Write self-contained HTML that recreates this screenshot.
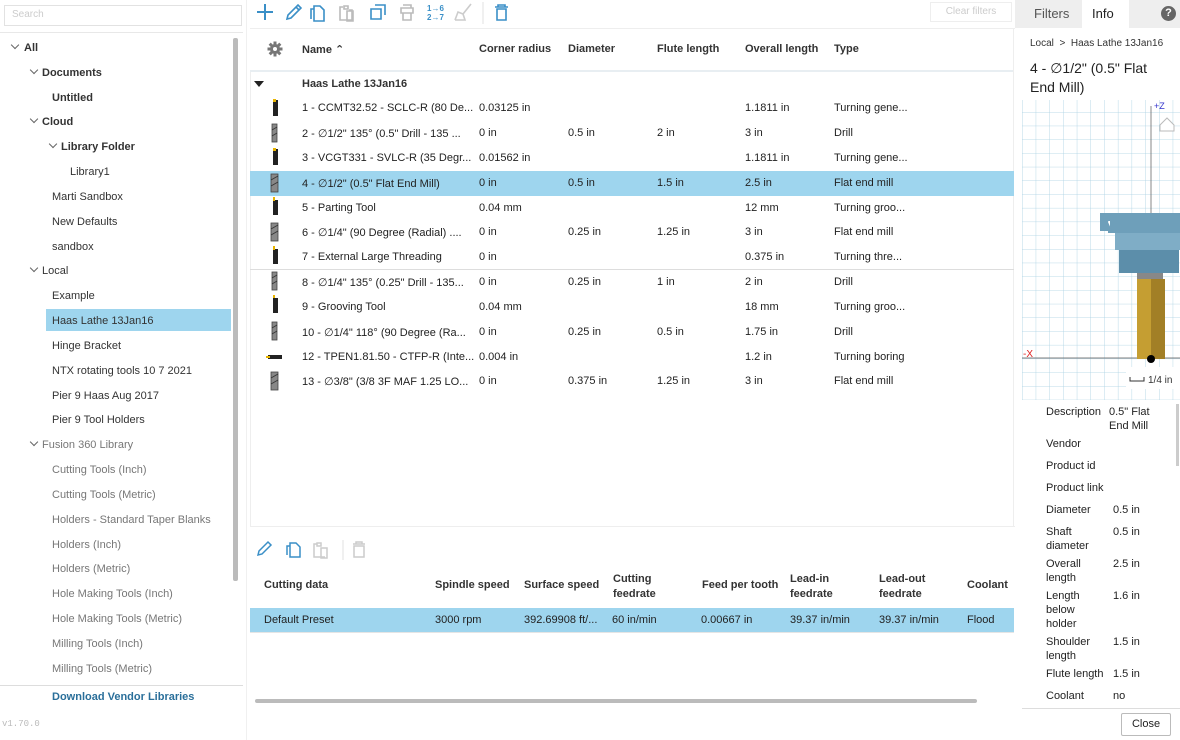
<!DOCTYPE html>
<html><head><meta charset="utf-8">
<style>
*{box-sizing:border-box;margin:0;padding:0}
body{width:1180px;height:740px;overflow:hidden;background:#fff;font-family:"Liberation Sans","DejaVu Sans",sans-serif;font-size:11px;color:#222;position:relative}
.a{position:absolute;white-space:nowrap}
.t{position:absolute;white-space:nowrap;line-height:14px}
.tree .t{font-weight:bold;color:#333;margin-top:1px}
.tree .g{font-weight:normal;color:#777}
.chev{position:absolute;width:6px;height:6px;border-right:1px solid #666;border-bottom:1px solid #666;transform:rotate(45deg)}
.row{position:absolute;left:250px;width:764px;height:25px}
.row span{position:absolute;top:6px;white-space:nowrap}
.hd{font-weight:bold;color:#333}
</style></head><body>

<!-- LEFT PANEL -->
<div class="a" style="left:4px;top:5px;width:238px;height:21px;border:1px solid #e2e2e2;"></div>
<div class="a" style="left:12px;top:9px;color:#ccc;font-size:10px">Search</div>
<div class="a" style="left:0;top:32px;width:243px;height:1px;background:#e8e8e8"></div>
<div class="a" style="left:233px;top:38px;width:5px;height:543px;background:#bbb;border-radius:2px"></div>
<div class="tree">
<div class="chev" style="left:12px;top:42px"></div><div class="t" style="left:24px;top:40px">All</div>
<div class="chev" style="left:31px;top:67px"></div><div class="t" style="left:42px;top:65px">Documents</div>
<div class="t" style="left:52px;top:90px">Untitled</div>
<div class="chev" style="left:31px;top:116px"></div><div class="t" style="left:42px;top:114px">Cloud</div>
<div class="chev" style="left:50px;top:141px"></div><div class="t" style="left:61px;top:139px">Library Folder</div>
<div class="t" style="left:70px;top:164px;font-weight:normal">Library1</div>
<div class="t" style="left:52px;top:189px;font-weight:normal">Marti Sandbox</div>
<div class="t" style="left:52px;top:214px;font-weight:normal">New Defaults</div>
<div class="t" style="left:52px;top:239px;font-weight:normal">sandbox</div>
<div class="chev" style="left:31px;top:265px"></div><div class="t" style="left:42px;top:263px;font-weight:normal">Local</div>
<div class="t" style="left:52px;top:288px;font-weight:normal">Example</div>
<div class="a" style="left:46px;top:309px;width:185px;height:22px;background:#9ed5ee"></div>
<div class="t" style="left:52px;top:313px;font-weight:normal">Haas Lathe 13Jan16</div>
<div class="t" style="left:52px;top:338px;font-weight:normal">Hinge Bracket</div>
<div class="t" style="left:52px;top:363px;font-weight:normal">NTX rotating tools 10 7 2021</div>
<div class="t" style="left:52px;top:388px;font-weight:normal">Pier 9 Haas Aug 2017</div>
<div class="t" style="left:52px;top:412px;font-weight:normal">Pier 9 Tool Holders</div>
<div class="chev" style="left:31px;top:439px"></div><div class="t g" style="left:42px;top:437px">Fusion 360 Library</div>
<div class="t g" style="left:52px;top:462px">Cutting Tools (Inch)</div>
<div class="t g" style="left:52px;top:487px">Cutting Tools (Metric)</div>
<div class="t g" style="left:52px;top:512px">Holders - Standard Taper Blanks</div>
<div class="t g" style="left:52px;top:537px">Holders (Inch)</div>
<div class="t g" style="left:52px;top:561px">Holders (Metric)</div>
<div class="t g" style="left:52px;top:586px">Hole Making Tools (Inch)</div>
<div class="t g" style="left:52px;top:611px">Hole Making Tools (Metric)</div>
<div class="t g" style="left:52px;top:636px">Milling Tools (Inch)</div>
<div class="t g" style="left:52px;top:661px">Milling Tools (Metric)</div>
</div>
<div class="a" style="left:0;top:685px;width:243px;height:1px;background:#ddd"></div>
<div class="t" style="left:52px;top:690px;color:#2a6f9a;font-weight:bold">Download Vendor Libraries</div>
<div class="a" style="left:2px;top:719px;font-family:'Liberation Mono',monospace;font-size:9px;color:#bbb">v1.70.0</div>
<div class="a" style="left:246px;top:0;width:1px;height:740px;background:#f0f0f0"></div>

<!-- TOOLBAR -->
<svg class="a" style="left:252px;top:0" width="270" height="26" fill="none" stroke-width="1.6">
 <path d="M13 4v16M5 12h16" stroke="#3a8fc7" stroke-width="2"/>
 <path d="M35 19l1-4 10-10 3 3-10 10z M44 7l3 3" stroke="#3a8fc7"/>
 <path d="M62 6h6l4 4v11h-10z M62 9h-3v10" stroke="#3a8fc7"/>
 <path d="M91 7h-3v13h12v-10h-3 M92 6h4v3h-4z M95 11h6v10h-6z" stroke="#bbb"/>
 <path d="M119 9h10v10h-10z M123 5h10v10" stroke="#3a8fc7"/>
 <path d="M149 8h12v5h-12z M151 13v7h8v-7 M151 5h8v3" stroke="#bbb"/>
 <text x="175" y="11" font-size="8" fill="#3a8fc7" stroke="none" font-weight="bold" font-family="Liberation Sans">1→6</text>
 <text x="175" y="20" font-size="8" fill="#3a8fc7" stroke="none" font-weight="bold" font-family="Liberation Sans">2→7</text>
 <path d="M203 20l3-8 5 2 8-10 M203 20h10l-2-6" stroke="#ccc"/>
 <path d="M231 2v22" stroke="#e0e0e0" stroke-width="1"/>
 <path d="M243 7h13 M246 7v-2h7v2 M245 9h9v11h-9z" stroke="#3a8fc7"/>
</svg>
<div class="a" style="left:930px;top:2px;width:82px;height:20px;border:1px solid #eee;color:#ccc;font-size:10px;text-align:center;line-height:18px">Clear filters</div>
<div class="a" style="left:250px;top:28px;width:765px;height:1px;background:#eee"></div>

<!-- HEADER -->
<svg class="a" style="left:267px;top:41px" width="16" height="16" viewBox="0 0 16 16"><g fill="#777"><circle cx="8" cy="8" r="5"/><rect x="6.5" y="0.5" width="3" height="15"/><rect x="0.5" y="6.5" width="15" height="3"/><rect x="6.5" y="0.5" width="3" height="15" transform="rotate(45 8 8)"/><rect x="6.5" y="0.5" width="3" height="15" transform="rotate(-45 8 8)"/></g><circle cx="8" cy="8" r="2" fill="#fff"/></svg>
<div class="a hd" style="left:302px;top:43px">Name &#8963;</div>
<div class="a hd" style="left:479px;top:43px">Corner radius</div>
<div class="a hd" style="left:568px;top:43px">Diameter</div>
<div class="a hd" style="left:657px;top:43px">Flute length</div>
<div class="a hd" style="left:745px;top:43px">Overall length</div>
<div class="a hd" style="left:834px;top:43px">Type</div>
<div class="a" style="left:250px;top:70px;width:764px;height:2px;background:#e8eef2"></div>
<div class="a" style="left:254px;top:81px;width:0;height:0;border-left:5px solid transparent;border-right:5px solid transparent;border-top:6px solid #222"></div>
<div class="a" style="left:302px;top:78px;color:#333;font-weight:bold">Haas Lathe 13Jan16</div>
<div class="a" style="left:250px;top:72px;width:1px;height:455px;background:#eee"></div>
<div class="a" style="left:1013px;top:29px;width:1px;height:498px;background:#eee"></div>

<!-- ROWS -->
<div class="row" style="top:96px"><span style="left:52px">1 - CCMT32.52 - SCLC-R (80 De...</span><span style="left:229px">0.03125 in</span><span style="left:495px">1.1811 in</span><span style="left:584px">Turning gene...</span></div>
<div class="row" style="top:121px"><span style="left:52px">2 - ∅1/2" 135° (0.5" Drill - 135 ...</span><span style="left:229px">0 in</span><span style="left:318px">0.5 in</span><span style="left:407px">2 in</span><span style="left:495px">3 in</span><span style="left:584px">Drill</span></div>
<div class="row" style="top:146px"><span style="left:52px">3 - VCGT331 - SVLC-R (35 Degr...</span><span style="left:229px">0.01562 in</span><span style="left:495px">1.1811 in</span><span style="left:584px">Turning gene...</span></div>
<div class="row" style="top:171px;background:#9ed5ee"><span style="left:52px">4 - ∅1/2" (0.5" Flat End Mill)</span><span style="left:229px">0 in</span><span style="left:318px">0.5 in</span><span style="left:407px">1.5 in</span><span style="left:495px">2.5 in</span><span style="left:584px">Flat end mill</span></div>
<div class="row" style="top:196px"><span style="left:52px">5 - Parting Tool</span><span style="left:229px">0.04 mm</span><span style="left:495px">12 mm</span><span style="left:584px">Turning groo...</span></div>
<div class="row" style="top:220px"><span style="left:52px">6 - ∅1/4" (90 Degree (Radial) ....</span><span style="left:229px">0 in</span><span style="left:318px">0.25 in</span><span style="left:407px">1.25 in</span><span style="left:495px">3 in</span><span style="left:584px">Flat end mill</span></div>
<div class="row" style="top:245px"><span style="left:52px">7 - External Large Threading</span><span style="left:229px">0 in</span><span style="left:495px">0.375 in</span><span style="left:584px">Turning thre...</span></div>
<div class="a" style="left:250px;top:269px;width:764px;height:1px;background:#ddd"></div>
<div class="row" style="top:270px"><span style="left:52px">8 - ∅1/4" 135° (0.25" Drill - 135...</span><span style="left:229px">0 in</span><span style="left:318px">0.25 in</span><span style="left:407px">1 in</span><span style="left:495px">2 in</span><span style="left:584px">Drill</span></div>
<div class="row" style="top:295px"><span style="left:52px">9 - Grooving Tool</span><span style="left:229px">0.04 mm</span><span style="left:495px">18 mm</span><span style="left:584px">Turning groo...</span></div>
<div class="row" style="top:320px"><span style="left:52px">10 - ∅1/4" 118° (90 Degree (Ra...</span><span style="left:229px">0 in</span><span style="left:318px">0.25 in</span><span style="left:407px">0.5 in</span><span style="left:495px">1.75 in</span><span style="left:584px">Drill</span></div>
<div class="row" style="top:345px"><span style="left:52px">12 - TPEN1.81.50 - CTFP-R (Inte...</span><span style="left:229px">0.004 in</span><span style="left:495px">1.2 in</span><span style="left:584px">Turning boring</span></div>
<div class="row" style="top:369px"><span style="left:52px">13 - ∅3/8" (3/8 3F MAF 1.25 LO...</span><span style="left:229px">0 in</span><span style="left:318px">0.375 in</span><span style="left:407px">1.25 in</span><span style="left:495px">3 in</span><span style="left:584px">Flat end mill</span></div>

<!-- row icons -->
<svg class="a" style="left:266px;top:96px" width="20" height="300">
 <g fill="#222"><rect x="7" y="4" width="5" height="16"/><rect x="7" y="53" width="5" height="16"/><rect x="7" y="104" width="5" height="15"/><rect x="7" y="153" width="5" height="15"/><rect x="7" y="302" width="5" height="15"/><rect x="2" y="259" width="14" height="4"/></g>
 <g fill="#e8b400"><rect x="7" y="3" width="3" height="3"/><rect x="7" y="52" width="3" height="3"/><rect x="7" y="101" width="2" height="4"/><rect x="7" y="150" width="2" height="4"/><rect x="7" y="199" width="2" height="4"/><rect x="0" y="260" width="4" height="2"/></g>
 <g fill="#888" stroke="#444" stroke-width="0.8"><rect x="6" y="28" width="5" height="18"/><rect x="5" y="78" width="7" height="18"/><rect x="5" y="127" width="7" height="18"/><rect x="6" y="176" width="5" height="18"/><rect x="6" y="226" width="5" height="18"/><rect x="5" y="276" width="7" height="18"/></g>
 <g stroke="#333" stroke-width="0.8"><path d="M6 34l5-3M6 40l5-3M5 84l7-4M5 90l7-4M5 133l7-4M5 139l7-4M6 182l5-3M6 188l5-3M6 232l5-3M6 238l5-3M5 282l7-4M5 288l7-4"/></g>
 <rect x="7" y="202" width="5" height="15" fill="#222"/>
</svg>

<!-- BOTTOM PANEL -->
<div class="a" style="left:250px;top:526px;width:765px;height:1px;background:#eee"></div>
<svg class="a" style="left:255px;top:538px" width="120" height="22" fill="none" stroke-width="1.5">
 <path d="M3 17l1-4 9-9 3 3-9 9z" stroke="#3a8fc7"/>
 <path d="M35 5h6l4 4v10h-10z M35 8h-3v9" stroke="#3a8fc7"/>
 <path d="M62 6h-3v13h11 M62 5h4v3h-4z M66 10h6v10h-6z" stroke="#ccc"/>
 <path d="M88 2v20" stroke="#e0e0e0" stroke-width="1"/>
 <path d="M98 6h12 M101 6v-2h6v2 M99 8h10v11h-10z" stroke="#ccc"/>
</svg>
<div class="a hd" style="left:264px;top:579px">Cutting data</div>
<div class="a hd" style="left:435px;top:579px">Spindle speed</div>
<div class="a hd" style="left:524px;top:579px">Surface speed</div>
<div class="a hd" style="left:613px;top:572px;line-height:15px;white-space:normal">Cutting<br>feedrate</div>
<div class="a hd" style="left:702px;top:579px">Feed per tooth</div>
<div class="a hd" style="left:790px;top:572px;line-height:15px">Lead-in<br>feedrate</div>
<div class="a hd" style="left:879px;top:572px;line-height:15px">Lead-out<br>feedrate</div>
<div class="a hd" style="left:967px;top:579px">Coolant</div>
<div class="row" style="top:608px;height:24px;background:#9ed5ee"><span style="left:14px">Default Preset</span><span style="left:185px">3000 rpm</span><span style="left:274px">392.69908 ft/...</span><span style="left:362px">60 in/min</span><span style="left:451px">0.00667 in</span><span style="left:540px">39.37 in/min</span><span style="left:629px">39.37 in/min</span><span style="left:717px">Flood</span></div>
<div class="a" style="left:250px;top:632px;width:764px;height:1px;background:#e5e5e5"></div>
<div class="a" style="left:255px;top:699px;width:722px;height:4px;background:#bbb;border-radius:2px"></div>

<!-- RIGHT PANEL -->
<div class="a" style="left:1015px;top:0;width:165px;height:28px;background:#eeeeee"></div>
<div class="a" style="left:1082px;top:0;width:47px;height:28px;background:#fff"></div>
<div class="a" style="left:1034px;top:6px;font-size:13px;color:#555">Filters</div>
<div class="a" style="left:1092px;top:6px;font-size:13px;color:#222">Info</div>
<div class="a" style="left:1161px;top:6px;width:15px;height:15px;border-radius:50%;background:#666;color:#fff;font-size:11px;font-weight:bold;text-align:center;line-height:15px">?</div>
<div class="a" style="left:1030px;top:38px;font-size:10px;color:#333">Local &nbsp;&gt;&nbsp; Haas Lathe 13Jan16</div>
<div class="a" style="left:1030px;top:59px;font-size:14px;line-height:19px;color:#222">4 - ∅1/2" (0.5" Flat<br>End Mill)</div>
<svg class="a" style="left:1022px;top:100px" width="158" height="300">
 <defs><pattern id="gp" width="13.7" height="13.7" patternUnits="userSpaceOnUse" x="0" y="12"><path d="M0 0V14M0 0H14" stroke="#a8d0e2" stroke-width="0.8" fill="none"/></pattern></defs>
 <rect width="158" height="300" fill="url(#gp)"/>
 <path d="M129 6V258M0 258H158" stroke="#555" stroke-width="0.7"/>
 <text x="132" y="9" font-size="9" fill="#33c" font-family="Liberation Sans">+Z</text>
 <path d="M138 25l7-7 7 7v6h-14z" fill="#fff" stroke="#bbb"/>
 <path d="M86 113h72v20h-72z" fill="#6e9fba"/>
 <path d="M82 121h6v6h-6z" fill="#fff"/>
 <path d="M78 113h12l-4 9 4 9h-12z" fill="#6e9fba"/>
 <path d="M93 133h65v17h-65z" fill="#7fadc6"/>
 <path d="M97 150h60v23h-60z" fill="#5c8eaa"/>
 <path d="M115 173h26v6h-26z" fill="#888"/>
 <path d="M115 179h28v80h-28z" fill="#c59e32"/>
 <path d="M129 179h14v80h-14z" fill="#a27f26"/>
 <circle cx="129" cy="259" r="4" fill="#000"/>
 <text x="1" y="257" font-size="10" fill="#d22" font-family="Liberation Sans">-X</text>
 <rect x="104" y="267" width="54" height="22" fill="#fff"/>
 <path d="M108 277v4h14v-4" stroke="#333" fill="none"/>
 <text x="126" y="283" font-size="10" fill="#333" font-family="Liberation Sans">1/4 in</text>
</svg>
<div class="a" style="left:1176px;top:404px;width:3px;height:62px;background:#ccc"></div>
<div class="t" style="left:1046px;top:405px">Description</div><div class="t" style="left:1109px;top:405px">0.5" Flat<br>End Mill</div>
<div class="t" style="left:1046px;top:437px">Vendor</div>
<div class="t" style="left:1046px;top:459px">Product id</div>
<div class="t" style="left:1046px;top:481px">Product link</div>
<div class="t" style="left:1046px;top:503px">Diameter</div><div class="t" style="left:1113px;top:503px">0.5 in</div>
<div class="t" style="left:1046px;top:525px">Shaft<br>diameter</div><div class="t" style="left:1113px;top:525px">0.5 in</div>
<div class="t" style="left:1046px;top:557px">Overall<br>length</div><div class="t" style="left:1113px;top:557px">2.5 in</div>
<div class="t" style="left:1046px;top:589px">Length<br>below<br>holder</div><div class="t" style="left:1113px;top:589px">1.6 in</div>
<div class="t" style="left:1046px;top:635px">Shoulder<br>length</div><div class="t" style="left:1113px;top:635px">1.5 in</div>
<div class="t" style="left:1046px;top:667px">Flute length</div><div class="t" style="left:1113px;top:667px">1.5 in</div>
<div class="t" style="left:1046px;top:689px">Coolant</div><div class="t" style="left:1113px;top:689px">no</div>
<div class="a" style="left:1022px;top:708px;width:158px;height:1px;background:#ddd"></div>
<div class="a" style="left:1121px;top:713px;width:50px;height:23px;border:1px solid #bbb;border-radius:2px;text-align:center;line-height:21px;color:#222">Close</div>
</body></html>
